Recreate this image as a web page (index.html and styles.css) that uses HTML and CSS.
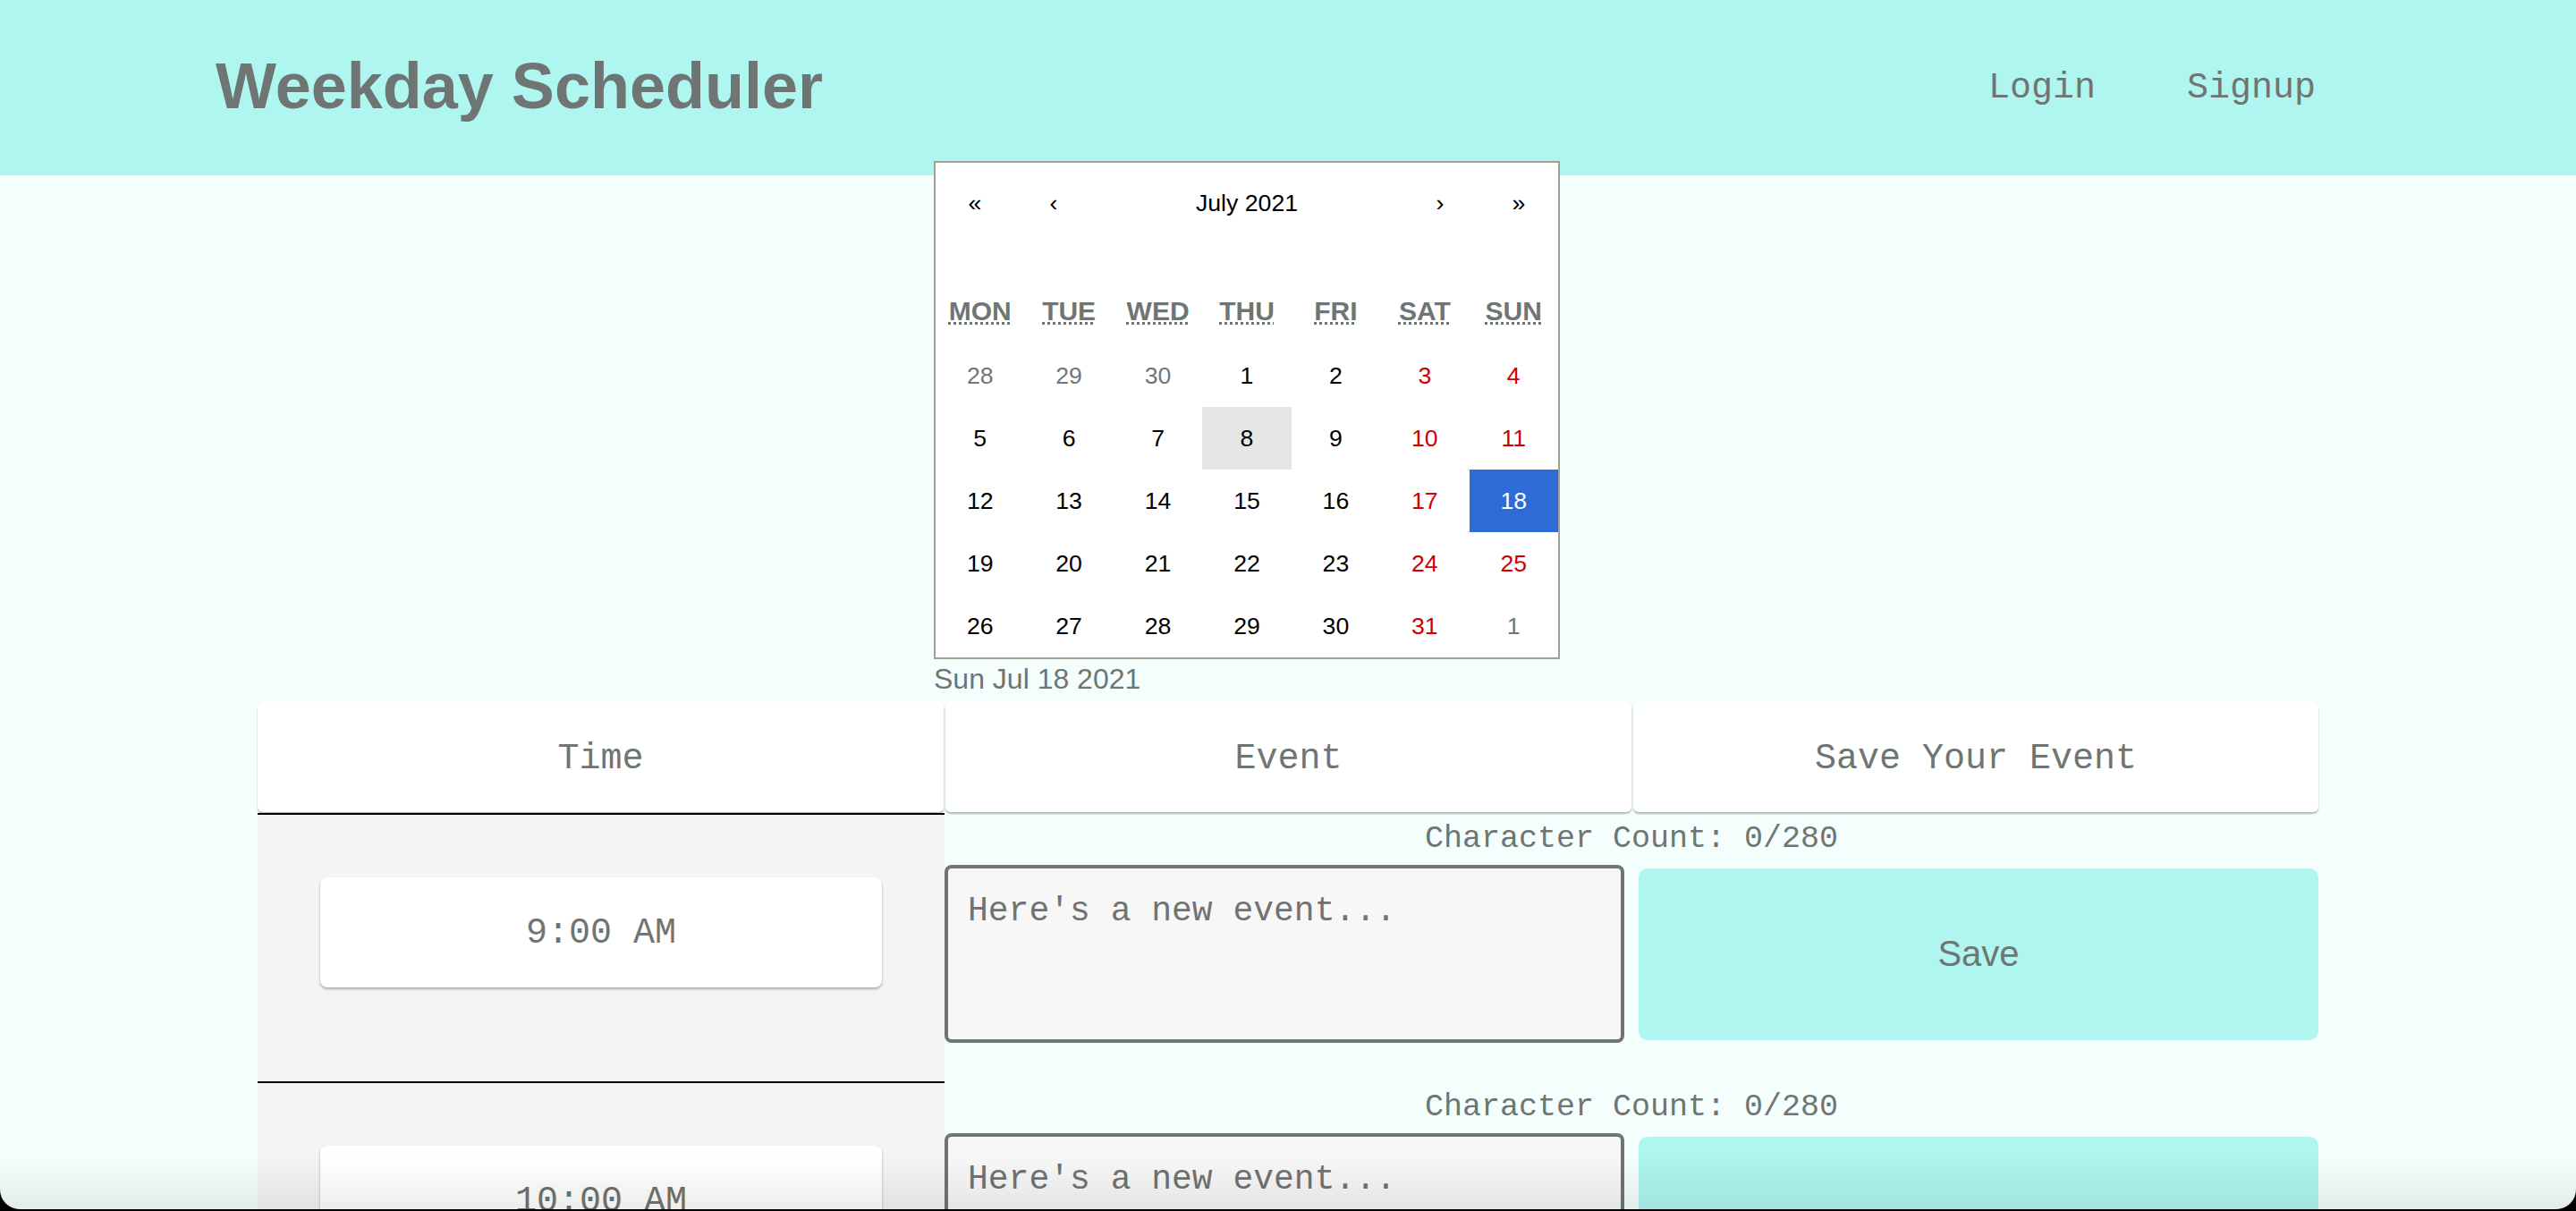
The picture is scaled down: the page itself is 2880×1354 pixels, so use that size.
FILE: index.html
```html
<!DOCTYPE html>
<html lang="en">
<head>
<meta charset="utf-8">
<title>Weekday Scheduler</title>
<link rel="stylesheet" href="styles.css">
</head>
<body>
<header class="topbar">
  <h1 class="brand">Weekday Scheduler</h1>
  <nav class="nav">
    <a class="nav-link" href="#">Login</a>
    <a class="nav-link" href="#">Signup</a>
  </nav>
</header>

<main class="page">
  <section class="date-picker">
    <div class="calendar">
      <div class="cal-nav">
        <button class="cal-nav-btn">«</button>
        <button class="cal-nav-btn">‹</button>
        <button class="cal-nav-btn cal-nav-label">July 2021</button>
        <button class="cal-nav-btn">›</button>
        <button class="cal-nav-btn">»</button>
      </div>
      <div class="cal-weekdays">
        <div class="cal-weekday"><abbr title="Monday">Mon</abbr></div>
        <div class="cal-weekday"><abbr title="Tuesday">Tue</abbr></div>
        <div class="cal-weekday"><abbr title="Wednesday">Wed</abbr></div>
        <div class="cal-weekday"><abbr title="Thursday">Thu</abbr></div>
        <div class="cal-weekday"><abbr title="Friday">Fri</abbr></div>
        <div class="cal-weekday"><abbr title="Saturday">Sat</abbr></div>
        <div class="cal-weekday"><abbr title="Sunday">Sun</abbr></div>
      </div>
      <div class="cal-days">
        <button class="cal-day other">28</button>
        <button class="cal-day other">29</button>
        <button class="cal-day other">30</button>
        <button class="cal-day">1</button>
        <button class="cal-day">2</button>
        <button class="cal-day weekend">3</button>
        <button class="cal-day weekend">4</button>

        <button class="cal-day">5</button>
        <button class="cal-day">6</button>
        <button class="cal-day">7</button>
        <button class="cal-day today">8</button>
        <button class="cal-day">9</button>
        <button class="cal-day weekend">10</button>
        <button class="cal-day weekend">11</button>

        <button class="cal-day">12</button>
        <button class="cal-day">13</button>
        <button class="cal-day">14</button>
        <button class="cal-day">15</button>
        <button class="cal-day">16</button>
        <button class="cal-day weekend">17</button>
        <button class="cal-day active">18</button>

        <button class="cal-day">19</button>
        <button class="cal-day">20</button>
        <button class="cal-day">21</button>
        <button class="cal-day">22</button>
        <button class="cal-day">23</button>
        <button class="cal-day weekend">24</button>
        <button class="cal-day weekend">25</button>

        <button class="cal-day">26</button>
        <button class="cal-day">27</button>
        <button class="cal-day">28</button>
        <button class="cal-day">29</button>
        <button class="cal-day">30</button>
        <button class="cal-day weekend">31</button>
        <button class="cal-day other">1</button>
      </div>
    </div>
    <div class="selected-date">Sun Jul 18 2021</div>
  </section>

  <section class="planner">
    <div class="planner-head">
      <div class="head-cell">Time</div>
      <div class="head-cell">Event</div>
      <div class="head-cell">Save Your Event</div>
    </div>

    <div class="hour-row">
      <div class="time-cell"><div class="time-card">9:00 AM</div></div>
      <div class="event-cell">
        <div class="char-count">Character Count: 0/280</div>
        <div class="event-controls">
          <textarea class="event-input" placeholder="Here's a new event..."></textarea>
          <button class="save-btn">Save</button>
        </div>
      </div>
    </div>

    <div class="hour-row">
      <div class="time-cell"><div class="time-card">10:00 AM</div></div>
      <div class="event-cell">
        <div class="char-count">Character Count: 0/280</div>
        <div class="event-controls">
          <textarea class="event-input" placeholder="Here's a new event..."></textarea>
          <button class="save-btn">Save</button>
        </div>
      </div>
    </div>
  </section>
</main>

<div class="window-frame" aria-hidden="true"></div>
</body>
</html>
```

FILE: styles.css
```css
* {
  box-sizing: border-box;
}

html,
body {
  margin: 0;
  padding: 0;
}

body {
  background: #f4fffd;
  color: #6f7573;
  font-family: "Liberation Sans", Arial, Helvetica, sans-serif;
}

/* ---------- Top bar ---------- */
.topbar {
  height: 196px;
  background: #aff5f0;
  display: flex;
  align-items: center;
  justify-content: space-between;
  padding: 0 291px 0 241px;
}

.brand {
  margin: 0 0 4px 0;
  font-family: "Liberation Sans", Arial, Helvetica, sans-serif;
  font-weight: bold;
  font-size: 72px;
  line-height: 83px;
  color: #6f7573;
}

.nav {
  display: flex;
  gap: 102px;
}

.nav-link {
  font-family: "Liberation Mono", "Courier New", monospace;
  font-size: 40px;
  line-height: 45px;
  color: #6f7573;
  text-decoration: none;
}

/* ---------- Calendar ---------- */
.date-picker {
  width: 700px;
  margin: -16px 0 0 1044px;
}

.calendar {
  width: 700px;
  background: #fff;
  border: 2px solid #a0a096;
  font-family: "Liberation Sans", Arial, Helvetica, sans-serif;
  font-size: 40px;
  line-height: 45px;
}

.cal-nav {
  display: flex;
  height: 88px;
  margin-bottom: 40px;
}

.cal-nav-btn {
  min-width: 88px;
  margin: 0;
  padding: 3px 0 0;
  border: 0;
  background: none;
  font-family: "Liberation Sans", Arial, Helvetica, sans-serif;
  font-size: 26.67px;
  color: #000;
}

.cal-nav-label {
  flex-grow: 1;
}

.cal-weekdays {
  display: grid;
  grid-template-columns: repeat(7, 1fr);
  text-align: center;
  text-transform: uppercase;
  font-weight: bold;
  font-size: 30px;
  color: #6f7573;
}

.cal-weekday {
  padding: 15px 0;
}

.cal-weekday abbr {
  text-decoration: underline dotted;
}

.cal-days {
  display: grid;
  grid-template-columns: repeat(7, 1fr);
}

.cal-day {
  height: 70px;
  margin: 0;
  padding: 0;
  border: 0;
  background: none;
  font-family: "Liberation Sans", Arial, Helvetica, sans-serif;
  font-size: 26.67px;
  line-height: 32px;
  color: #000;
  text-align: center;
}

.cal-day.weekend {
  color: #d10000;
}

.cal-day.other {
  color: #757575;
}

.cal-day.today {
  background: #e6e6e6;
}

.cal-day.active {
  background: #2e6bd6;
  color: #fff;
}

.selected-date {
  padding-top: 4px;
  margin-bottom: 7px;
  font-size: 32px;
  line-height: 37px;
  color: #6f7573;
}

/* ---------- Planner ---------- */
.planner {
  width: 2304px;
  margin: 0 auto;
}

.planner-head {
  display: grid;
  grid-template-columns: 767px 767px 766px;
  column-gap: 2px;
  height: 124px;
}

.head-cell {
  height: 123px;
  padding-top: 3px;
  background: #fff;
  border-radius: 6px;
  box-shadow: 0 2px 2px rgba(0, 0, 0, 0.28);
  display: flex;
  align-items: center;
  justify-content: center;
  font-family: "Liberation Mono", "Courier New", monospace;
  font-size: 40px;
  color: #6f7573;
}

.hour-row {
  display: grid;
  grid-template-columns: 768px 1536px;
}

.time-cell {
  background: #f4f4f4;
  border-top: 2px solid #000;
  padding: 70px 70px 105px;
}

.time-card {
  height: 123px;
  padding-top: 2px;
  background: #fff;
  border-radius: 8px;
  box-shadow: 0 2px 3px rgba(0, 0, 0, 0.3);
  display: flex;
  align-items: center;
  justify-content: center;
  font-family: "Liberation Mono", "Courier New", monospace;
  font-size: 40px;
  color: #6f7573;
}

.event-cell {
  padding-top: 2px;
}

.char-count {
  padding-top: 2px;
  text-align: center;
  font-family: "Liberation Mono", "Courier New", monospace;
  font-size: 35px;
  line-height: 50px;
  color: #6f7573;
}

.event-controls {
  display: grid;
  grid-template-columns: 1fr 1fr;
  column-gap: 16px;
  align-items: center;
  margin-top: 4px;
}

.event-input {
  display: block;
  width: 100%;
  height: 199px;
  margin: 0;
  padding: 26px 22px 22px;
  border: 4px solid #6f7573;
  border-radius: 8px;
  background: #f7f7f7;
  font-family: "Liberation Mono", "Courier New", monospace;
  font-size: 38px;
  color: #6f7573;
  resize: none;
}

.event-input::placeholder {
  color: #727272;
}

.save-btn {
  height: 192px;
  margin: 0;
  border: 0;
  border-radius: 10px;
  background: #aff5f0;
  font-family: "Liberation Sans", Arial, Helvetica, sans-serif;
  font-size: 40px;
  color: #6f7573;
}

/* ---------- Window edge overlay (screenshot frame) ---------- */
.window-frame {
  position: fixed;
  top: 0;
  left: 0;
  right: 0;
  bottom: 2px;
  border-radius: 0 0 22px 22px;
  box-shadow: 0 0 0 40px #000;
  background: linear-gradient(to bottom, rgba(0, 0, 0, 0) calc(100% - 60px), rgba(0, 0, 0, 0.07));
  pointer-events: none;
}
```
